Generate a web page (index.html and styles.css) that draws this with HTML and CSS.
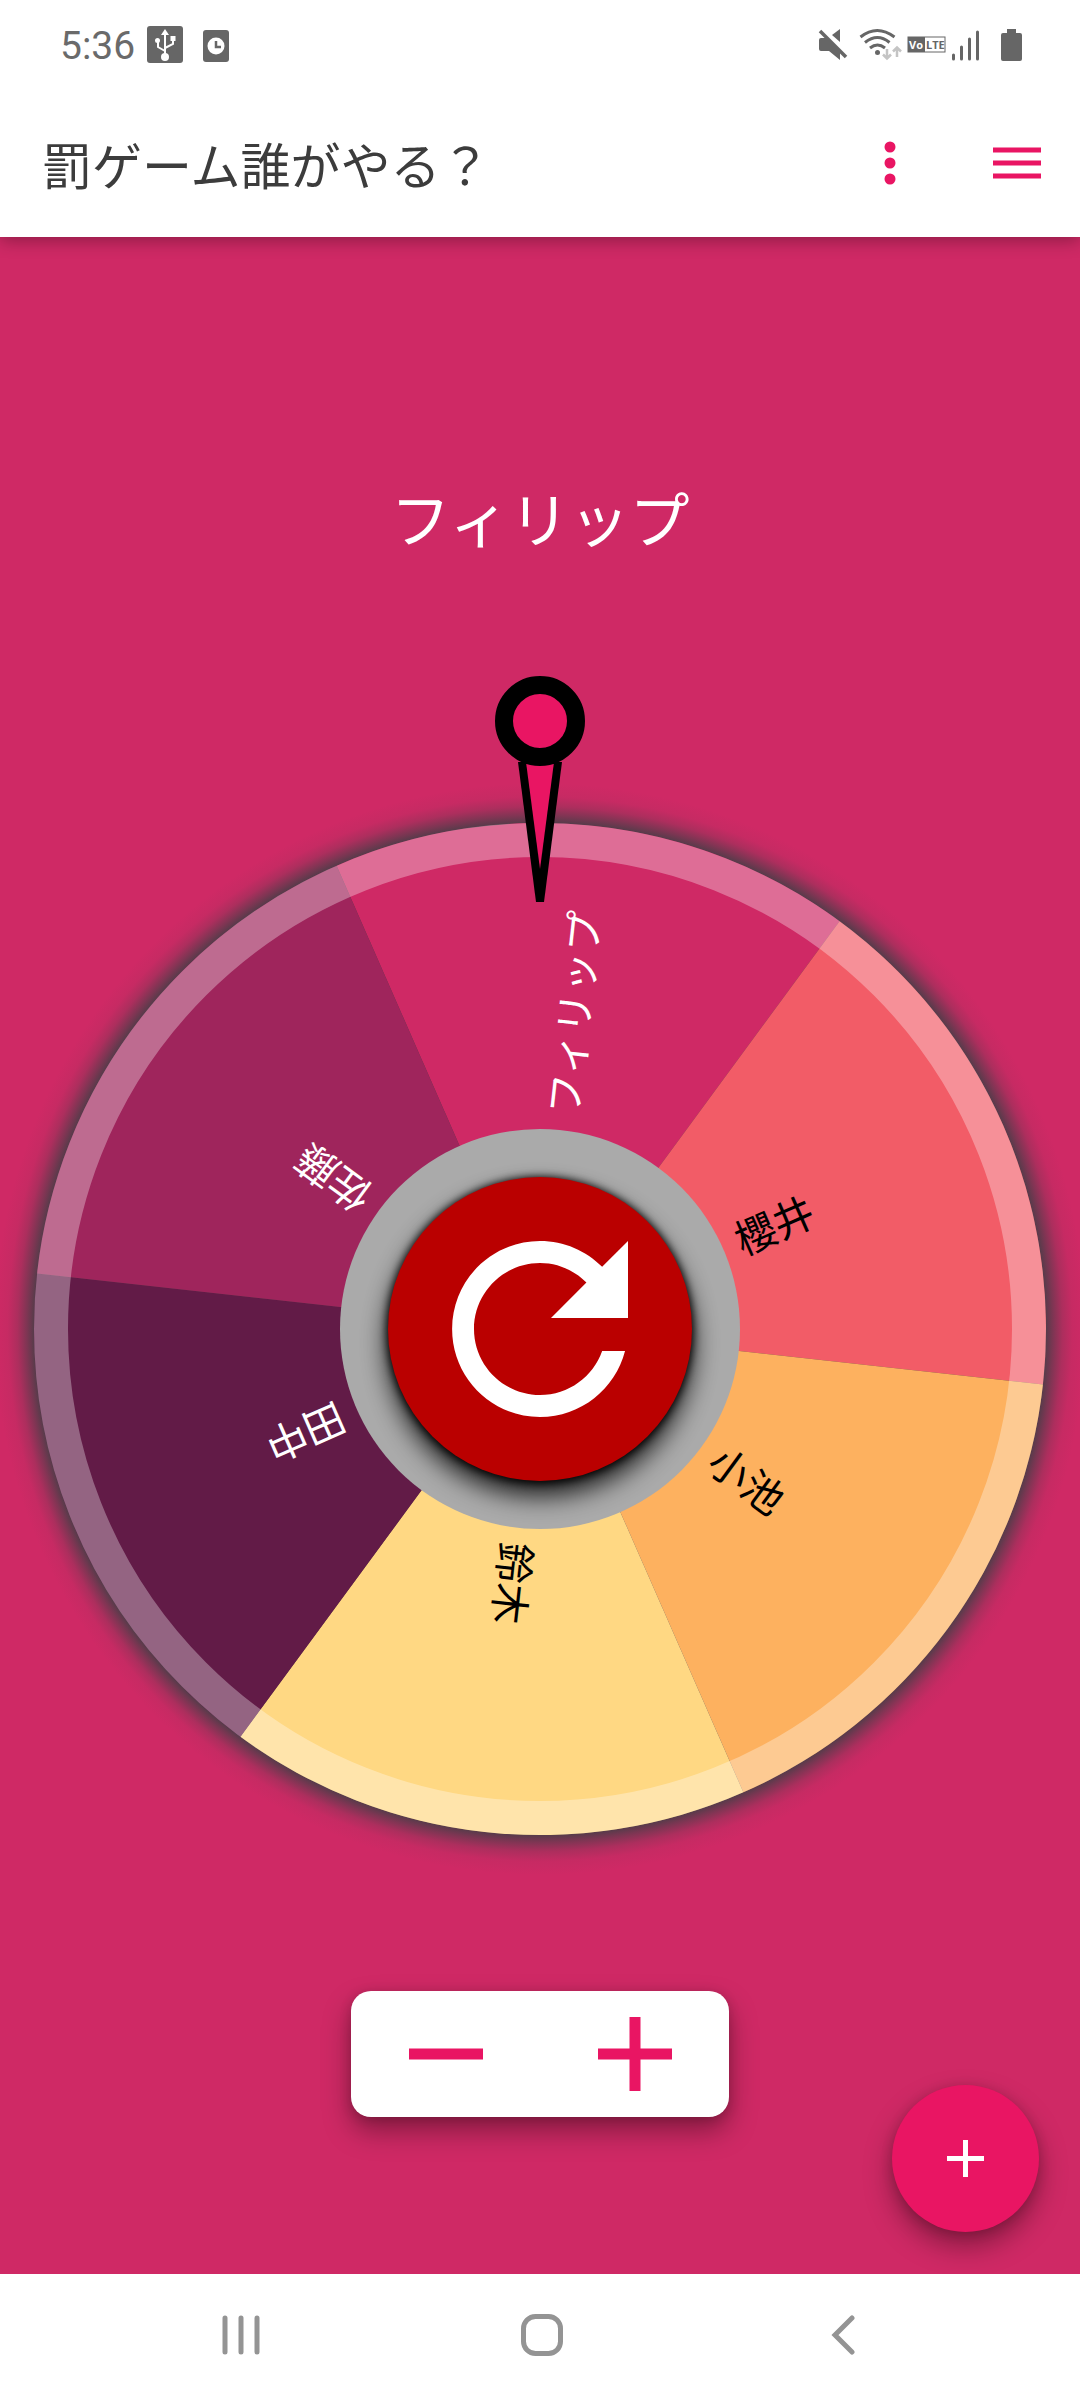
FILE: index.html
```html
<!DOCTYPE html>
<html lang="ja">
<head>
<meta charset="utf-8">
<meta name="viewport" content="width=device-width, initial-scale=1">
<title>罰ゲーム誰がやる？</title>
<link rel="stylesheet" href="styles.css">
</head>
<body>
<div class="screen">
  <div class="status-bar">
    <span class="clock">5:36</span>
    <svg class="status-left" width="84" height="40" viewBox="146 24 84 40" aria-hidden="true">
      <rect x="147" y="26" width="36" height="37" rx="3" fill="#666"/>
      <g stroke="#fff" stroke-width="2" fill="none"><path d="M165 33V57M165 51l-7-4v-6M165 48l8-4v-5"/></g>
      <path d="M161 35l4-6 4 6z" fill="#fff"/><circle cx="165" cy="57" r="4" fill="#fff"/><circle cx="157.500" cy="40.500" r="2.500" fill="#fff"/><rect x="170.500" y="36" width="5" height="5" fill="#fff"/>
      <rect x="203" y="30" width="26" height="32" rx="3" fill="#666"/><circle cx="216" cy="46" r="8.500" fill="#fff"/><path d="M216 41v6h5" fill="none" stroke="#666" stroke-width="2.500"/>
    </svg>
    <svg class="status-right" width="210" height="40" viewBox="816 24 210 40" aria-hidden="true">
      <g fill="#666">
        <path d="M821 38h5l14 14v8l-11-9h-8q-2 0-2-2v-9q0-2 2-2z"/>
        <path d="M840 29v13l-8-7z"/>
      </g>
      <path d="M820 31l26 26" stroke="#666" stroke-width="3.500"/>
      <g fill="none" stroke="#666" stroke-width="3"><path d="M860.500 37Q877 24 894.500 37"/><path d="M865 42.500q12.500-10 24.500 0"/><path d="M870 48q7.500-6 15 0"/></g>
      <circle cx="877.500" cy="52.500" r="2.500" fill="#666"/>
      <g fill="none" stroke="#c4c4c4" stroke-width="2.500"><path d="M887 49v9M883 54.500l4 4 4-4M897 57v-9M893 51.500l4-4 4 4"/></g>
      <rect x="908" y="37" width="37" height="15" fill="#fff" stroke="#666"/><rect x="908" y="37" width="17" height="15" fill="#666"/>
      <text x="909" y="49" class="volte volte-light">Vo</text><text x="926" y="49" class="volte">LTE</text>
      <g stroke="#666" stroke-width="3" stroke-linecap="round"><path d="M953.500 55v4M961.500 47v12M969.500 39v20M977.500 32v27"/></g>
      <path d="M1007 29h9v4h4q2 0 2 2v24q0 2-2 2h-17q-2 0-2-2V35q0-2 2-2h4z" fill="#666"/>
    </svg>
  </div>
  <header class="app-bar">
    <h1 class="title">罰ゲーム誰がやる？</h1>
    <button class="icon-button" type="button" aria-label="その他">
      <svg width="12" height="44" viewBox="0 0 12 44"><g fill="#e91563"><circle cx="6" cy="6" r="5.500"/><circle cx="6" cy="22" r="5.500"/><circle cx="6" cy="38" r="5.500"/></g></svg>
    </button>
    <button class="icon-button menu-button" type="button" aria-label="メニュー">
      <svg width="48" height="32" viewBox="0 0 48 32"><path d="M0 3h48M0 16h48M0 29h48" stroke="#e91563" stroke-width="5"/></svg>
    </button>
  </header>
  <main class="stage">
    <p class="result">フィリップ</p>
    <div class="wheel-area">
      <svg class="wheel" viewBox="0 0 1080 1180" role="img" aria-label="ルーレット">
        <defs>
          <radialGradient id="halo" gradientUnits="userSpaceOnUse" cx="540" cy="654" r="546">
            <stop offset="0.926" stop-color="#3f3f45" stop-opacity="0.850"/>
            <stop offset="0.940" stop-color="#3f3f45" stop-opacity="0.560"/>
            <stop offset="0.957" stop-color="#3f3f45" stop-opacity="0.240"/>
            <stop offset="0.975" stop-color="#3f3f45" stop-opacity="0.060"/>
            <stop offset="1" stop-color="#3f3f45" stop-opacity="0"/>
          </radialGradient>
          <filter id="shade" x="-20%" y="-20%" width="140%" height="150%"><feGaussianBlur stdDeviation="13"/></filter>
          <filter id="edge" x="-20%" y="-20%" width="140%" height="140%"><feGaussianBlur stdDeviation="4"/></filter>
          <clipPath id="hub"><circle cx="540" cy="654" r="200"/></clipPath>
        </defs>
        <circle cx="540" cy="654" r="546" fill="url(#halo)"/>
        <g transform="translate(540 654) rotate(6.300)">
          <path fill="#cf2965" d="M0 0L-253-438.200A506 506 0 0 1 253-438.200Z"/>
          <path fill="#f25c67" d="M0 0L253-438.200A506 506 0 0 1 506 0Z"/>
          <path fill="#fdb15f" d="M0 0L506 0A506 506 0 0 1 253 438.200Z"/>
          <path fill="#ffd883" d="M0 0L253 438.200A506 506 0 0 1-253 438.200Z"/>
          <path fill="#621b47" d="M0 0L-253 438.200A506 506 0 0 1-506 0Z"/>
          <path fill="#9f255c" d="M0 0L-506 0A506 506 0 0 1-253-438.200Z"/>
        </g>
        <circle cx="540" cy="654" r="489" fill="none" stroke="#fff" stroke-opacity="0.320" stroke-width="34"/>
        <g class="names" transform="translate(540 654)">
          <text class="light" transform="rotate(-83.700)" x="216" y="15">フィリップ</text>
          <text transform="rotate(-23.700)" x="215" y="15">櫻井</text>
          <text transform="rotate(36.300)" x="215" y="15">小池</text>
          <text transform="rotate(96.300)" x="215" y="15">鈴木</text>
          <text class="light" transform="rotate(156.300)" x="215" y="15">田中</text>
          <text class="light" transform="rotate(216.300)" x="215" y="15">佐藤</text>
        </g>
        <circle cx="540" cy="654" r="200" fill="#aaa"/>
        <g clip-path="url(#hub)">
          <circle cx="540" cy="668" r="153" filter="url(#shade)" opacity="0.850"/>
          <circle cx="540" cy="655" r="153" filter="url(#edge)"/>
        </g>
        <path d="M518 87h44L544 227h-8z" fill="#000"/>
        <path d="M526 87h28L540 194z" fill="#e91563"/>
        <circle cx="540" cy="46" r="36" fill="#e91563" stroke="#000" stroke-width="18"/>
      </svg>
      <button class="spin" type="button" aria-label="回す">
        <svg class="spin-icon" viewBox="4 4 16 16"><path fill="#fff" d="M17.650 6.350C16.200 4.900 14.210 4 12 4c-4.420 0-7.990 3.580-7.990 8s3.570 8 7.990 8c3.730 0 6.840-2.550 7.730-6h-2.080c-.820 2.330-3.040 4-5.650 4-3.310 0-6-2.690-6-6s2.690-6 6-6c1.660 0 3.140.690 4.220 1.780L13 11h7V4z"/></svg>
      </button>
    </div>
    <div class="stepper">
      <button class="step" type="button" aria-label="減らす"><svg width="74" height="74" viewBox="0 0 74 74"><path d="M0 37h74" stroke="#e91563" stroke-width="11"/></svg></button>
      <button class="step" type="button" aria-label="増やす"><svg width="74" height="74" viewBox="0 0 74 74"><path d="M0 37h74M37 0v74" stroke="#e91563" stroke-width="11"/></svg></button>
    </div>
    <button class="fab" type="button" aria-label="追加"><svg width="37" height="37" viewBox="0 0 37 37"><path d="M0 18.500h37M18.500 0v37" stroke="#fff" stroke-width="5"/></svg></button>
  </main>
  <nav class="nav-bar" aria-label="システム">
    <button class="nav-button" type="button" aria-label="履歴"><svg width="40" height="42" viewBox="0 0 40 42"><path d="M4 4v34M20 4v34M36 4v34" stroke="#949494" stroke-width="5" stroke-linecap="round"/></svg></button>
    <button class="nav-button" type="button" aria-label="ホーム"><svg width="42" height="42" viewBox="0 0 42 42"><rect x="2.500" y="2.500" width="37" height="37" rx="12" fill="none" stroke="#949494" stroke-width="5"/></svg></button>
    <button class="nav-button" type="button" aria-label="戻る"><svg width="24" height="42" viewBox="0 0 24 42"><path d="M21 4L4 21l17 17" fill="none" stroke="#949494" stroke-width="5" stroke-linecap="round"/></svg></button>
  </nav>
</div>
</body>
</html>
```
FILE: styles.css
```css
* { box-sizing: border-box; }
body {
  margin: 0;
  background: #fff;
  font-family: "Noto Sans CJK JP", sans-serif;
}
button {
  display: flex;
  align-items: center;
  justify-content: center;
  padding: 0;
  border: 0;
  background: none;
}
.screen {
  display: flex;
  flex-direction: column;
  min-height: 100vh;
}
.status-bar {
  position: relative;
  z-index: 2;
  display: flex;
  align-items: center;
  height: 88px;
  padding: 0 54px 0 60px;
  background: #fff;
}
.clock {
  width: 86px;
  padding-top: 4px;
  font: 39px/48px Roboto, sans-serif;
  color: #6a6a6a;
}
.status-right { margin-left: auto; }
.volte { font: bold 11px "Open Sans", sans-serif; fill: #666; }
.volte-light { fill: #fff; }
.app-bar {
  position: relative;
  z-index: 1;
  display: flex;
  align-items: center;
  height: 149px;
  padding: 0 39px 0 42px;
  background: #fff;
  box-shadow: 0 4px 16px rgba(0, 0, 0, 0.3);
}
.title {
  flex: 1;
  margin: 0;
  font-size: 50px;
  line-height: 72px;
  font-weight: 400;
  color: #3c3c3c;
}
.icon-button { height: 100px; }
.menu-button { margin-left: 97px; }
.stage {
  position: relative;
  flex: 1;
  display: flex;
  flex-direction: column;
  align-items: center;
  padding-top: 236px;
  background: #cf2965;
}
.result {
  margin: 0;
  font-size: 60px;
  line-height: 88px;
  font-weight: 400;
  color: #fff;
}
.wheel-area {
  display: grid;
  width: 100%;
  margin-top: 114px;
}
.wheel {
  display: block;
  grid-area: 1 / 1;
  width: 100%;
  overflow: visible;
}
.names { font-size: 41px; font-weight: 400; }
.light { fill: #fff; }
.spin {
  grid-area: 1 / 1;
  place-self: center;
  width: 304px;
  height: 304px;
  margin-top: 128px;
  border-radius: 50%;
  background: #ba0000;
}
.spin-icon { width: 176px; height: 176px; }
.stepper {
  display: flex;
  width: 378px;
  height: 126px;
  margin-top: 136px;
  border-radius: 20px;
  background: #fff;
  box-shadow: 0 14px 28px rgba(0, 0, 0, 0.36), 0 2px 12px rgba(0, 0, 0, 0.16);
}
.step { flex: 1; }
.fab {
  position: absolute;
  right: 41px;
  bottom: 42px;
  width: 147px;
  height: 147px;
  border-radius: 50%;
  background: #e91563;
  box-shadow: 0 14px 28px rgba(0, 0, 0, 0.36), 0 2px 12px rgba(0, 0, 0, 0.16);
}
.nav-bar {
  position: relative;
  display: flex;
  justify-content: center;
  align-items: center;
  height: 126px;
  padding: 0 0 4px 4px;
  background: #fff;
}
.nav-button { width: 28%; height: 100%; }
```
